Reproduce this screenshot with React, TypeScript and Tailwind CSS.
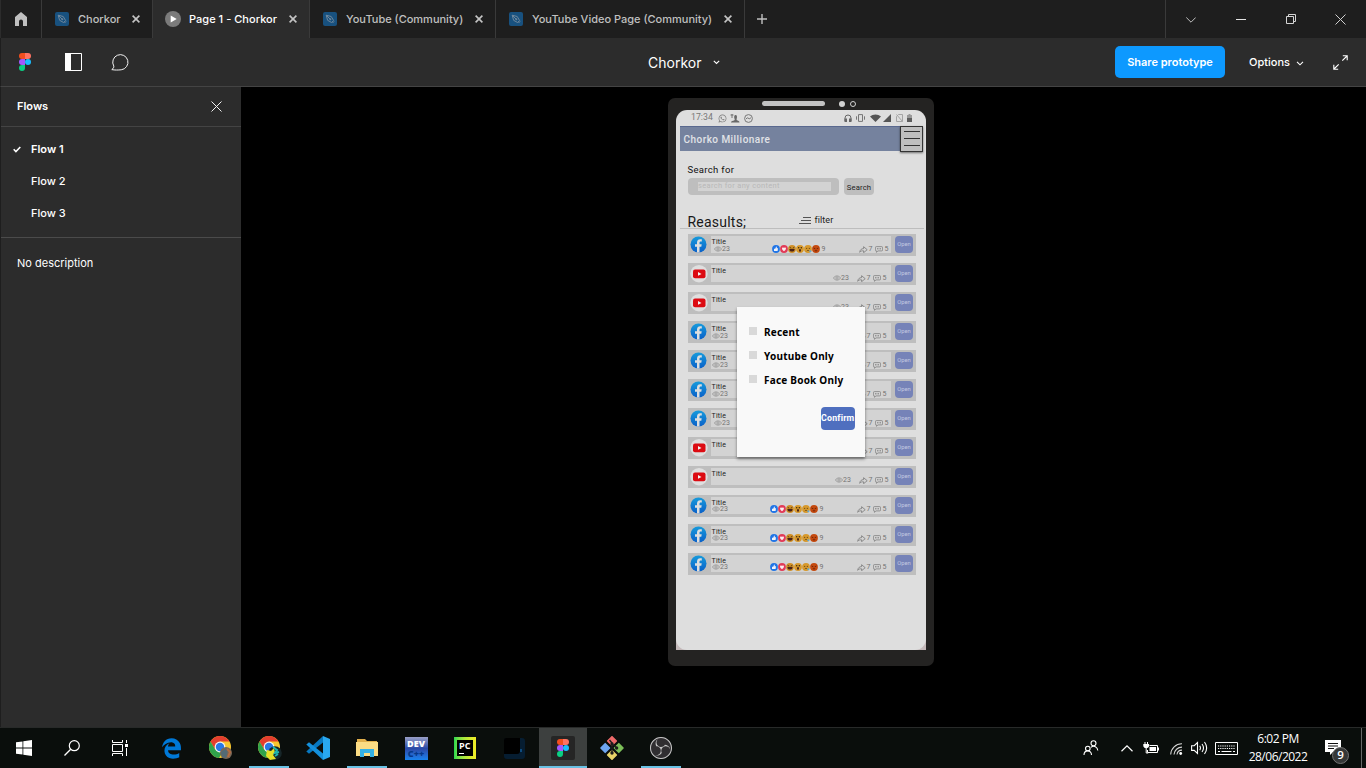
import React from "react";
import { FaEdgeLegacy, FaWhatsapp } from "react-icons/fa6";
import { SiObsstudio } from "react-icons/si";

type SvgProps = { w: number; h: number; vb?: string; className?: string; children: React.ReactNode };

function Svg({ w, h, vb, className = "", children }: SvgProps) {
  return (
    <svg width={w} height={h} viewBox={vb ?? `0 0 ${w} ${h}`} fill="none" className={`block shrink-0 ${className}`}>
      {children}
    </svg>
  );
}

function FigmaLogo({ w = 13, h = 18 }: { w?: number; h?: number }) {
  return (
    <Svg w={w} h={h} vb="0 0 12 18">
      <path d="M3 0h3v6H3a3 3 0 0 1 0-6Z" fill="#f24e1e" />
      <path d="M6 0h3a3 3 0 0 1 0 6H6Z" fill="#ff7262" />
      <path d="M3 6h3v6H3a3 3 0 0 1 0-6Z" fill="#a259ff" />
      <circle cx="9" cy="9" r="3" fill="#1abcfe" />
      <path d="M3 12h3v3a3 3 0 1 1-3-3Z" fill="#0acf83" />
    </Svg>
  );
}

function PenFile() {
  return (
    <Svg w={14} h={14}>
      <rect width="14" height="14" rx="2" fill="#18517f" />
      <path d="M3.2 3.2l5 1.3 2.4 4-2 2-4-2.2-1.4-5.1Zm0 0l4 4M9.5 11l1.6-1.6" stroke="#6f879c" strokeWidth="1" />
      <circle cx="7.3" cy="7.3" r="1" fill="#6f879c" />
    </Svg>
  );
}

function TabClose() {
  return (
    <Svg w={8} h={8}>
      <path d="M.6.6l6.8 6.8M7.4.6L.6 7.4" stroke="#c4c4c4" strokeWidth="1.6" />
    </Svg>
  );
}

function TitleBar() {
  return (
    <header className="flex h-[38px] shrink-0 border-l border-[#2c2c2c] bg-[#1e1e1e] text-[11px] font-medium leading-4 text-[#c0c0c0]">
      <div className="flex w-[41px] items-center justify-center border-r border-[#3a3a3a]">
        <Svg w={12} h={14} className="mr-px">
          <path d="M6 0l6 5v9H8V9.5a2 2 0 0 0-4 0V14H0V5Z" fill="#c0c0c0" />
        </Svg>
      </div>
      <div className="flex w-[110px] items-center pl-[13px]">
        <PenFile />
        <span className="ml-[9px] w-[54px]">Chorkor</span>
        <TabClose />
      </div>
      <div className="flex w-[158px] items-center border-x border-[#3a3a3a] bg-[#2c2c2c] pl-3 tracking-[0.03px] text-white">
        <Svg w={16} h={16}>
          <circle cx="8" cy="8" r="8" fill="#7b7b7b" />
          <path d="M5.7 4.5l6 3.5-6 3.5Z" fill="#fff" />
        </Svg>
        <span className="ml-2 w-[100px] whitespace-nowrap">Page 1 - Chorkor</span>
        <TabClose />
      </div>
      <div className="flex w-[186px] items-center border-r border-[#3a3a3a] pl-[13px]">
        <PenFile />
        <span className="ml-[9px] w-[129px] whitespace-nowrap">YouTube (Community)</span>
        <TabClose />
      </div>
      <div className="flex w-[249px] items-center border-r border-[#3a3a3a] pl-[13px]">
        <PenFile />
        <span className="ml-[9px] w-[192px] whitespace-nowrap">YouTube Video Page (Community)</span>
        <TabClose />
      </div>
      <div className="flex items-center pl-3">
        <Svg w={10} h={10}>
          <path d="M5 0v10M0 5h10" stroke="#c0c0c0" strokeWidth="1.4" />
        </Svg>
      </div>
      <div className="ml-auto flex w-[201px] border-l border-[#3a3a3a]">
        <div className="flex w-[50px] items-center justify-center">
          <Svg w={10} h={6} className="mt-px">
            <path d="M.3.5L5 5.2 9.7.5" stroke="#c0c0c0" />
          </Svg>
        </div>
        <div className="flex w-[50px] items-center justify-center">
          <Svg w={10} h={1} className="mt-px">
            <path d="M0 .5h10" stroke="#e4e4e4" />
          </Svg>
        </div>
        <div className="flex w-[50px] items-center justify-center">
          <Svg w={10} h={10}>
            <path d="M.5 2.5h7v7h-7ZM2.5 2.5v-2h7v7h-2" stroke="#d5d5d5" />
          </Svg>
        </div>
        <div className="flex w-[49px] items-center justify-center">
          <Svg w={11} h={11}>
            <path d="M.5.5l10 10M10.5.5l-10 10" stroke="#d0d0d0" />
          </Svg>
        </div>
      </div>
    </header>
  );
}

function Toolbar() {
  return (
    <div className="flex h-[49px] shrink-0 items-center border-b border-l border-[#444] border-l-[#1e1e1e] bg-[#2c2c2c] text-white">
      <div className="flex w-[647px] items-center pl-[17px]">
        <FigmaLogo w={14} h={18} />
        <Svg w={17} h={18} className="ml-[33px]">
          <path d="M.5.5h16v17H.5Z" stroke="#fff" />
          <path d="M0 0h6v18H0Z" fill="#fff" />
        </Svg>
        <Svg w={19} h={17} className="ml-[29px]">
          <path d="M.8 15.6c1.6-1.2 2.2-2.3 2-3.5A7.6 7.6 0 1 1 10.2 15.8c-3.2.3-6.3.4-9.4-.2Z" stroke="#f2f2f2" strokeWidth="1" />
        </Svg>
      </div>
      <span className="pt-[2px] text-[14px] leading-6">Chorkor</span>
      <Svg w={7} h={5} className="ml-[12px]">
        <path d="M.8.8l2.7 2.7L6.2.8" stroke="#fff" strokeWidth="1.1" />
      </Svg>
      <button className="ml-auto h-8 w-[110px] rounded-[5px] bg-[#0d99ff] text-[11px] font-semibold">Share prototype</button>
      <span className="ml-6 w-[42px] text-[11px] font-medium">Options</span>
      <Svg w={8} h={5} className="ml-[5px] mt-[3px]">
        <path d="M1 .8l3 3 3-3" stroke="#fff" strokeWidth="1.1" />
      </Svg>
      <Svg w={15} h={15} className="ml-[29px] mr-[18px]">
        <path d="M9.3 5.7l4.7-4.7M9.8.8h4.4v4.4M5.7 9.3L1 14M.8 9.8v4.4h4.4" stroke="#fff" strokeWidth="1.1" />
      </Svg>
    </div>
  );
}

function FlowPanel() {
  return (
    <aside className="flex w-[241px] shrink-0 flex-col border-l border-[#1e1e1e] bg-[#2c2c2c] text-[11px] text-white">
      <div className="flex h-10 items-center justify-between border-b border-[#444] pl-4 pr-[18px]">
        <span className="font-semibold">Flows</span>
        <Svg w={11} h={11} className="mr-px">
          <path d="M.5.5l10 10M10.5.5l-10 10" stroke="#f2f2f2" />
        </Svg>
      </div>
      <div className="flex h-[111px] flex-col border-b border-[#4b4b4b] pt-[6px] font-medium">
        <div className="flex h-8 items-center pl-3">
          <Svg w={8} h={7}>
            <path d="M.7 3.3l2.2 2.2L7.3 1" stroke="#fff" strokeWidth="1.6" />
          </Svg>
          <span className="ml-[10px] font-semibold">Flow 1</span>
        </div>
        <div className="flex h-8 items-center pl-[30px]">Flow 2</div>
        <div className="flex h-8 items-center pl-[30px]">Flow 3</div>
      </div>
      <p className="pl-4 pt-[17px] leading-4">No description</p>
    </aside>
  );
}

function Eye() {
  return (
    <Svg w={8} h={6}>
      <path d="M.4 3C2.2.2 5.8.2 7.6 3 5.8 5.8 2.2 5.8.4 3Z" stroke="#8b8b8b" strokeWidth=".7" />
      <circle cx="4" cy="3" r="1.2" stroke="#8b8b8b" strokeWidth=".7" />
    </Svg>
  );
}

function Views() {
  return (
    <>
      <Eye />
      <span className="ml-[0.5px]">23</span>
    </>
  );
}

function Face({ color, children }: { color: string; children: React.ReactNode }) {
  return (
    <Svg w={8} h={8}>
      <circle cx="4" cy="4" r="3.9" fill={color} />
      {children}
    </Svg>
  );
}

function Reactions() {
  return (
    <>
      <Face color="#2175e6">
        <path d="M2 3.7h1.2L4.2 1.5c.9.2.6 1.3.5 1.8H6L5.6 6H2Z" fill="#f1f3f8" />
      </Face>
      <Face color="#e23a57">
        <path d="M4 6.2C.7 3.9 2.2 1.3 4 2.9c1.8-1.6 3.3 1 0 3.3Z" fill="#fbeef0" />
      </Face>
      <Face color="#d08f26">
        <path d="M1.7 2.4l1.6.8M6.3 2.4l-1.6.8" stroke="#3a2a10" strokeWidth=".8" />
        <path d="M1.4 4h5.2a2.6 2.6 0 0 1-5.2 0Z" fill="#4a2117" />
      </Face>
      <Face color="#d7992c">
        <circle cx="2.7" cy="2.7" r=".7" fill="#33230c" />
        <circle cx="5.3" cy="2.7" r=".7" fill="#33230c" />
        <ellipse cx="4" cy="5.4" rx="1" ry="1.4" fill="#4a2117" />
      </Face>
      <Face color="#d7992c">
        <path d="M2 3.4h1.2M4.8 3.4H6M2.8 6c.5-.8 1.9-.8 2.4 0" stroke="#5c3b10" strokeWidth=".8" />
        <circle cx="6.3" cy="6.2" r="1" fill="#5aa9dc" />
      </Face>
      <Face color="#c54a0f">
        <path d="M1.6 3l1.7.8M6.4 3l-1.7.8M2.8 5.8h2.4" stroke="#5a1c08" strokeWidth=".8" />
      </Face>
      <span className="ml-[2px]">9</span>
    </>
  );
}

type Post = { kind: "fb" | "yt"; shift: boolean; raised?: boolean };

const posts: Post[] = [
  { kind: "fb", shift: true },
  { kind: "yt", shift: false },
  { kind: "yt", shift: false },
  { kind: "fb", shift: false },
  { kind: "fb", shift: false },
  { kind: "fb", shift: false },
  { kind: "fb", shift: true },
  { kind: "yt", shift: true, raised: true },
  { kind: "yt", shift: true, raised: true },
  { kind: "fb", shift: false, raised: true },
  { kind: "fb", shift: false, raised: true },
  { kind: "fb", shift: false, raised: true },
];

function PostRow({ kind, shift, raised }: Post) {
  return (
    <div className="flex h-[22px] w-[228.5px] bg-[#bebebe] pt-[2px]">
      <div className="flex w-[23px] pl-[2.5px]">
        {kind === "fb" ? (
          <Svg w={17} h={17}>
            <defs>
              <linearGradient id="fbBlue" x1="0" y1="0" x2="0" y2="1">
                <stop offset="0" stopColor="#179bdc" />
                <stop offset="1" stopColor="#0a60c8" />
              </linearGradient>
            </defs>
            <circle cx="8.5" cy="8.5" r="8" fill="url(#fbBlue)" />
            <path d="M7 16.4v-5.7H5V8.2h2V6.6C7 4.4 8.3 3.2 10.2 3.2l1.6.1v2.1h-1c-1 0-1.3.6-1.3 1.3v1.5h2.2l-.4 2.5H9.5v5.7Z" fill="#dedede" />
          </Svg>
        ) : (
          <Svg w={18} h={18}>
            <circle cx="9" cy="8.7" r="8.7" fill="#dfdfdf" />
            <rect x="3" y="4.5" width="12.5" height="8.8" rx="2" fill="#dc0b12" />
            <path d="M8 7l3.5 2L8 10.7Z" fill="#f3f3f3" />
          </Svg>
        )}
      </div>
      <div className={`flex h-[17px] w-[180.5px] flex-col bg-[#d3d3d3] text-[7px] leading-[7px] text-[#747474] ${shift ? "pl-[3px]" : "pl-px"}`}>
        <div className={`h-[9px] pt-[2.5px] text-[7px] tracking-[0.2px] text-[#1d1d1d] ${shift ? "-ml-[2px]" : ""}`}>Title</div>
        <div className={`flex h-[8px] items-center ${raised ? "-mt-px" : ""}`}>
          <div className="flex w-[58px] items-center">{kind === "fb" && <Views />}</div>
          <div className="flex w-[63px] items-center">{kind === "fb" && <Reactions />}</div>
          <div className="flex w-[24px] items-center">{kind === "yt" && <Views />}</div>
          <Svg w={9} h={7}>
            <path d="M.7 6.3C1 3.9 2.2 2.7 4.6 2.6V.7l3.6 3-3.6 3V4.8C2.9 4.7 1.7 5 .7 6.3Z" stroke="#747474" strokeWidth=".75" />
          </Svg>
          <span className="w-[7px] pl-px">7</span>
          <Svg w={8} h={7}>
            <path d="M1.4.6h5.2q1 0 1 1v2.3q0 1-1 1H3L1.4 6.3V4.9q-1 0-1-1V1.6q0-1 1-1Z" stroke="#7b7b7b" strokeWidth=".75" />
            <path d="M2 2.8h4" stroke="#7b7b7b" strokeWidth="1" strokeDasharray="1 .5" />
          </Svg>
          <span className="ml-[2px]">5</span>
        </div>
      </div>
      <div className="ml-[4px] flex h-[17px] w-[18px] items-center justify-center rounded-[4px] bg-[#7683b8] text-[5.8px] text-[#c3c9e0]">Open</div>
    </div>
  );
}

function StatusBar() {
  return (
    <div className="flex h-[16px] items-center pl-[15px] pr-[14px] text-[#777]">
      <span className="w-[27px] text-[8.7px] tracking-[0.05px]">17:34</span>
      <FaWhatsapp size={9} />
      <Svg w={10} h={9} className="ml-[3px]">
        <path d="M.5 1h3M2 0v4" stroke="#686868" strokeWidth=".9" />
        <path d="M1 8.4c0-1.7 2-1.3 3.4-2.1.5-.4.4-1 .1-1.6C3.8 2.5 4.3.9 5.6.9s1.8 1.6 1.1 3.8c-.3.6-.2 1.2.2 1.6 1 .6 2.6.4 2.6 2.1Z" fill="#686868" />
      </Svg>
      <Svg w={9} h={9} className="ml-[4px]">
        <circle cx="4.5" cy="4.5" r="3.9" stroke="#777" />
        <path d="M2 4.8l1.7-1 1.5 1 1.8-1" stroke="#777" />
      </Svg>
      <div className="ml-auto flex items-center gap-[4.5px]">
        <Svg w={8} h={8}>
          <path d="M1 7V4a3 3 0 0 1 6 0v3" stroke="#666" />
          <path d="M.5 4.5H3V8H.5ZM5 4.5h2.5V8H5Z" fill="#666" />
        </Svg>
        <Svg w={9} h={8}>
          <path d="M2.5.6h4v6.8h-4ZM.5 2.3v3.4M8.5 2.3v3.4" stroke="#777" />
        </Svg>
        <Svg w={11} h={8}>
          <path d="M0 2.5C3-.3 8-.3 11 2.5L5.5 8Z" fill="#555" />
        </Svg>
        <Svg w={8} h={8} className="-ml-[2px]">
          <path d="M8 0v8H0Z" fill="#555" />
        </Svg>
        <Svg w={7} h={8}>
          <path d="M2.5.5h4v7h-6v-5ZM.5.5l6 7" stroke="#a5a5a5" />
        </Svg>
        <Svg w={5} h={8}>
          <path d="M0 1h1.5V0h2v1H5v7H0Z" fill="#999" />
          <path d="M0 4h5v4H0Z" fill="#5d5d5d" />
        </Svg>
      </div>
    </div>
  );
}

function FilterDialog() {
  return (
    <div className="absolute left-[61px] top-[196.5px] h-[150.5px] w-[128px] bg-[#f9f9f9] pl-[12px] pt-[13.5px] shadow-[0_2px_3px_rgba(0,0,0,0.45)]">
      {["Recent", "Youtube Only", "Face Book Only"].map((label) => (
        <label key={label} className="flex h-6 items-center font-['Noto_Sans','Open_Sans',sans-serif] text-[10px] font-bold tracking-[0.22px] text-black">
          <span className="mb-[2px] mr-[7px] h-[8px] w-[8px] bg-[#d9d9d9]" />
          {label}
        </label>
      ))}
      <button className="ml-[71.5px] mt-[15px] flex h-[23px] w-[34.5px] items-center justify-center rounded-[4px] bg-[#4f6fbf] text-[8.8px] font-bold tracking-[0.2px] text-white">
        Confirm
      </button>
    </div>
  );
}

function Phone() {
  return (
    <div className="mt-[11px] h-[568px] w-[266px] rounded-[7px] bg-[#242322] px-[8px] pt-[3px] font-['Roboto',sans-serif]">
      <div className="flex h-[9px] items-start pl-[86px]">
        <div className="h-[5px] w-[63px] rounded-full bg-[#c2c2c2]" />
        <div className="ml-[13.5px] h-[6px] w-[6px] rounded-full bg-[#d2d2d2]" />
        <div className="ml-[5.5px] h-[6px] w-[6px] rounded-full border-[1.5px] border-[#d2d2d2]" />
      </div>
      <div className="bg-[linear-gradient(#242322_50%,#c4b9ba_50%)]">
        <div className="relative flex h-[540px] w-[250px] flex-col rounded-[11px] bg-[#dedede]">
          <StatusBar />
          <div className="ml-[4px] flex h-[25px] w-[243px] items-center justify-between border-t border-[#59688e] bg-[#75829e] pl-[3.5px]">
            <span className="text-[10px] font-medium tracking-[0.46px] text-[#e1e3e7]">Chorko Millionare</span>
            <div className="flex h-[26px] w-[23px] flex-col items-center gap-[6px] border border-[#333] bg-[#bfbfbf] pt-[4px] shadow-[0_1px_2px_rgba(0,0,0,0.5)]">
              <div className="h-px w-[16px] shrink-0 bg-[#333]" />
              <div className="h-px w-[16px] shrink-0 bg-[#333]" />
              <div className="h-px w-[16px] shrink-0 bg-[#333]" />
            </div>
          </div>
          <div className="ml-[11.5px] mt-[12px] h-[15px] text-[9.5px] leading-[13px] tracking-[0.32px] text-[#111]">Search for</div>
          <div className="ml-[11.5px] flex h-[17px]">
            <div className="h-[17px] w-[151.5px] rounded-[4px] bg-[#bebebe] pl-[10.5px] pt-[4px]">
              <div className="h-[9px] w-[133px] bg-[#d3d3d3] text-[7.5px] leading-[8px] tracking-[0.33px] text-[#b8b8b8]">search for any content</div>
            </div>
            <div className="ml-[5px] flex h-[17px] w-[30px] items-center justify-center rounded-[4px] bg-[#bebebe] pt-[2px] text-[7.7px] tracking-[0.15px] text-[#222]">Search</div>
          </div>
          <div className="ml-[4px] flex h-[34px] w-[244px] items-end border-b border-[#bdbdbd] pl-[7.5px]">
            <span className="h-[15px] w-[111px] text-[14px] leading-[18px] tracking-[0.22px] text-[#181818]">Reasults;</span>
            <Svg w={13} h={7} className="mb-[4px]">
              <path d="M4 .5h8M2 3.5h10M0 6.5h12" stroke="#444" strokeWidth=".9" />
            </Svg>
            <span className="mb-[2px] ml-[3px] text-[9px] leading-[12px] tracking-[0.1px] text-[#222]">filter</span>
          </div>
          <div className="ml-[11.5px] mt-[5px] flex flex-col gap-[7px]">
            {posts.map((p, i) => (
              <PostRow key={i} {...p} />
            ))}
          </div>
          <FilterDialog />
        </div>
      </div>
    </div>
  );
}

function Chrome({ second = false }: { second?: boolean }) {
  return (
    <Svg w={25} h={26}>
      <circle cx="12" cy="12" r="11" fill="#f7c62f" />
      <path d="M2.5 6.5A11 11 0 0 1 21.5 6.5H12L7.2 14.7Z" fill="#e33e2e" />
      <path d="M2.5 6.5A11 11 0 0 0 11 23l5.2-8.5H7.2Z" fill="#30a34b" />
      <circle cx="12" cy="12" r="5.4" fill="#f4f4f4" />
      <circle cx="12" cy="12" r="4.2" fill="#2878e6" />
      {second ? (
        <g>
          <circle cx="18" cy="18" r="6.8" fill="#172629" />
          <path d="M10 15l4 1 3-3 1 5-2 2 3 4-6 1-4-4Z" fill="#e6df27" />
          <path d="M16 12l4 3-2 3 4-1M18 21l3-2" stroke="#1fb5b0" strokeWidth="2" />
        </g>
      ) : (
        <g>
          <circle cx="18" cy="18" r="6" fill="#786757" />
          <path d="M13 17l4-3 3 1-2 8-4-1Z" fill="#536a75" />
          <path d="M19 14l3 3-2 5" stroke="#b56b40" strokeWidth="2" />
        </g>
      )}
    </Svg>
  );
}

type AppCell = { name: string; state?: "open" | "active"; icon: React.ReactNode };

const pinned: AppCell[] = [
  { name: "Edge", icon: <FaEdgeLegacy size={21} color="#0078d7" /> },
  { name: "Chrome", icon: <Chrome /> },
  { name: "Chrome profile", state: "open", icon: <Chrome second /> },
  {
    name: "Code",
    icon: (
      <Svg w={24} h={24}>
        <path d="M17 0l7 3v18l-7 3Z" fill="#29a8f0" />
        <path d="M17 0v6.5L3 17.8.3 15.5Z" fill="#0878c0" />
        <path d="M.3 8.5L3 6.2 17 17.5V24Z" fill="#1490dc" />
      </Svg>
    ),
  },
  {
    name: "Files",
    state: "open",
    icon: (
      <Svg w={22} h={19} className="mb-[2px]">
        <path d="M1 1h8l2 2h10v14H1Z" fill="#e2b04c" />
        <path d="M0 4h22v14H0Z" fill="#fbdc84" />
        <path d="M4 19v-8h14v8h-4v-4H8v4Z" fill="#35b1e5" />
      </Svg>
    ),
  },
  {
    name: "Dev",
    icon: (
      <div className="flex h-[23px] w-[23px] flex-col items-center bg-linear-to-b from-[#9a9fc6] via-[#2a49a6] to-[#1683f0] pt-[2px] font-['Open_Sans','Liberation_Sans',sans-serif] text-[9px] font-extrabold leading-[10px] text-white">
        <span>DEV</span>
        <span className="text-[9px] text-[#073888]">C++</span>
      </div>
    ),
  },
  {
    name: "PyCharm",
    icon: (
      <div className="flex h-[22px] w-[22px] bg-linear-to-r from-[#22d84f] via-[#b1e93a] to-[#f3eb25] p-[3px]">
        <div className="h-[16px] w-[16px] bg-black pl-[2px] pt-[2px] font-['Open_Sans','Liberation_Sans',sans-serif] text-[9px] font-bold leading-[8px] text-white">
          PC
          <div className="mt-[3px] h-px w-[5px] bg-white" />
        </div>
      </div>
    ),
  },
  {
    name: "Dark",
    icon: (
      <Svg w={21} h={21}>
        <rect width="21" height="21" rx="3" fill="#061d31" />
        <path d="M0 2q0-2 2-2h14v13q0 3-3 3H0Z" fill="#000" />
        <path d="M17 11v3" stroke="#147bcc" />
      </Svg>
    ),
  },
  {
    name: "Figma",
    state: "active",
    icon: (
      <div className="flex h-6 w-6 items-center justify-center rounded-[2px] bg-[#252525]">
        <FigmaLogo w={12} h={18} />
      </div>
    ),
  },
  {
    name: "Git",
    icon: (
      <Svg w={24} h={24}>
        <path d="M12 .7L16.3 5 12 9.3 7.7 5Z" fill="#ee6b6b" stroke="#ee6b6b" strokeWidth="1.6" strokeLinejoin="round" />
        <path d="M18.8 7.7L23 12l-4.2 4.3L14.5 12Z" fill="#7cbf59" stroke="#7cbf59" strokeWidth="1.6" strokeLinejoin="round" />
        <path d="M5.2 7.7L9.5 12l-4.3 4.3L1 12Z" fill="#6da5f2" stroke="#6da5f2" strokeWidth="1.6" strokeLinejoin="round" />
        <path d="M12 14.7l4.3 4.3-4.3 4.3L7.7 19Z" fill="#ead56a" stroke="#ead56a" strokeWidth="1.6" strokeLinejoin="round" />
        <path d="M9.5 4l2.5 3v10M12 8l5 4" stroke="#1d1d1d" strokeWidth="1.4" />
        <circle cx="12" cy="8" r="1.7" fill="#1d1d1d" />
        <circle cx="16.6" cy="12" r="1.7" fill="#1d1d1d" />
        <circle cx="12" cy="17" r="1.7" fill="#1d1d1d" />
      </Svg>
    ),
  },
  {
    name: "OBS",
    state: "open",
    icon: (
      <div className="flex h-[22px] w-[22px] items-center justify-center rounded-full bg-[#302e31]">
        <SiObsstudio size={22} color="#c7c7c7" />
      </div>
    ),
  },
];

function Taskbar() {
  return (
    <footer className="flex h-[41px] shrink-0 border-t border-[#282a29] bg-[#0a0e0c] text-white">
      <div className="flex w-[147px]">
        <div className="flex w-12 items-center justify-center">
          <Svg w={16} h={16}>
            <path d="M0 2.3L6.5 1.4v6.1H0ZM7.3 1.3L16 0v7.5H7.3ZM0 8.4h6.5v6.2L0 13.7ZM7.3 8.4H16V16l-8.7-1.3Z" fill="#fff" />
          </Svg>
        </div>
        <div className="flex w-12 items-center justify-center">
          <Svg w={16} h={16}>
            <circle cx="10.3" cy="5.7" r="5" stroke="#fff" strokeWidth="1.2" />
            <path d="M6.7 9.3L.5 15.5" stroke="#fff" strokeWidth="1.3" />
          </Svg>
        </div>
        <div className="flex w-12 items-center justify-center">
          <Svg w={16} h={16}>
            <path d="M.5 4.5h10v7H.5ZM.5 0v2.5h10V0M.5 16v-2.5h10V16M14.5 0v3M14.5 8v8" stroke="#fff" />
            <path d="M13 4h3v3h-3Z" fill="#fff" />
          </Svg>
        </div>
      </div>
      <div className="flex gap-px">
        {pinned.map((a) => (
          <div key={a.name} className={`flex w-12 flex-col items-center ${a.state === "active" ? "bg-[#3d403f]" : ""}`}>
            <div className="flex h-[38px] items-center justify-center pt-[2px]">{a.icon}</div>
            {a.state && <div className={`h-[2px] bg-[#69c1e4] ${a.state === "active" ? "w-12" : "w-10"}`} />}
          </div>
        ))}
      </div>
      <div className="ml-auto flex items-center">
        <Svg w={16} h={16}>
          <circle cx="10.5" cy="3.2" r="2.5" stroke="#fff" strokeWidth="1.1" />
          <circle cx="4.8" cy="8.5" r="2.3" stroke="#fff" strokeWidth="1.1" />
          <path d="M1 15c0-5.5 7.5-5.5 7.5 0M8 7.2c3-2 6.5-.5 6.8 3.3" stroke="#fff" strokeWidth="1.1" />
        </Svg>
        <Svg w={12} h={7} className="ml-[22px]">
          <path d="M.5 6.3L6 .9l5.5 5.4" stroke="#fff" strokeWidth="1.2" />
        </Svg>
        <Svg w={16} h={12} className="ml-[10px]">
          <path d="M6.5 3.5h8v7H4.5V8M2 0v2M4.5 0v2M3.2 6v5h2" stroke="#fff" />
          <path d="M.3 2h5.8v2.2q-.6 2-2.9 2t-2.9-2ZM6.5 5H13v4H6.5ZM15 5.5h1v3h-1Z" fill="#fff" />
        </Svg>
        <Svg w={13} h={12} className="ml-[11px] mt-[2px]">
          <path d="M.7 11.5A11 11 0 0 1 12 .8M4 11.5a8 8 0 0 1 8-7.4M7 11.5a5 5 0 0 1 5-4.4" stroke="#d5d5d5" strokeWidth="1.1" />
          <circle cx="10.7" cy="10.5" r="1.4" fill="#fff" />
        </Svg>
        <Svg w={17} h={14} className="ml-[8px]">
          <path d="M.6 4.7h2.6L6.5 1.5v11L3.2 9.4H.6ZM8.7 4.8q1.5 2.2 0 4.4M11 3q3 4 0 8M13.5 1q4.3 6 0 12" stroke="#fff" strokeWidth="1.1" />
        </Svg>
        <Svg w={23} h={13} className="ml-[7px]">
          <path d="M.5.5h22v12H.5Z" stroke="#fff" />
          <path d="M3 4h17M3 6.5h17" stroke="#fff" strokeWidth="1.1" strokeDasharray="1.2 1" />
          <path d="M3 9.5h2M6.5 9.5h10M18 9.5h2" stroke="#fff" />
        </Svg>
        <div className="ml-[5px] flex w-[70px] flex-col items-center whitespace-nowrap font-['Open_Sans','Noto_Sans',sans-serif] text-[12px] leading-[18px] tracking-[-0.5px]">
          <span>6:02 PM</span>
          <span>28/06/2022</span>
        </div>
        <div className="relative ml-[12px] h-6 w-6 pt-[4px]">
          <Svg w={16} h={15}>
            <path d="M0 0h16v12H8l-3 3v-3H0Z" fill="#fff" />
            <path d="M3 3.5h10M3 6h10M3 8.5h6" stroke="#111" />
          </Svg>
          <span className="absolute left-[7px] top-[10.5px] flex h-[17px] w-[17px] items-center justify-center rounded-full border border-[#747474] bg-[#353737] font-['Open_Sans',sans-serif] text-[11.5px] font-semibold">9</span>
        </div>
        <div className="ml-[12px] mr-1 h-10 w-px bg-[#656867]" />
      </div>
    </footer>
  );
}

export default function App() {
  return (
    <div className="flex h-screen w-full flex-col overflow-hidden bg-black font-['Inter',sans-serif]">
      <TitleBar />
      <Toolbar />
      <main className="flex min-h-0 flex-1">
        <FlowPanel />
        <section className="flex flex-1 justify-center bg-black pr-[5px]">
          <Phone />
        </section>
      </main>
      <Taskbar />
    </div>
  );
}
